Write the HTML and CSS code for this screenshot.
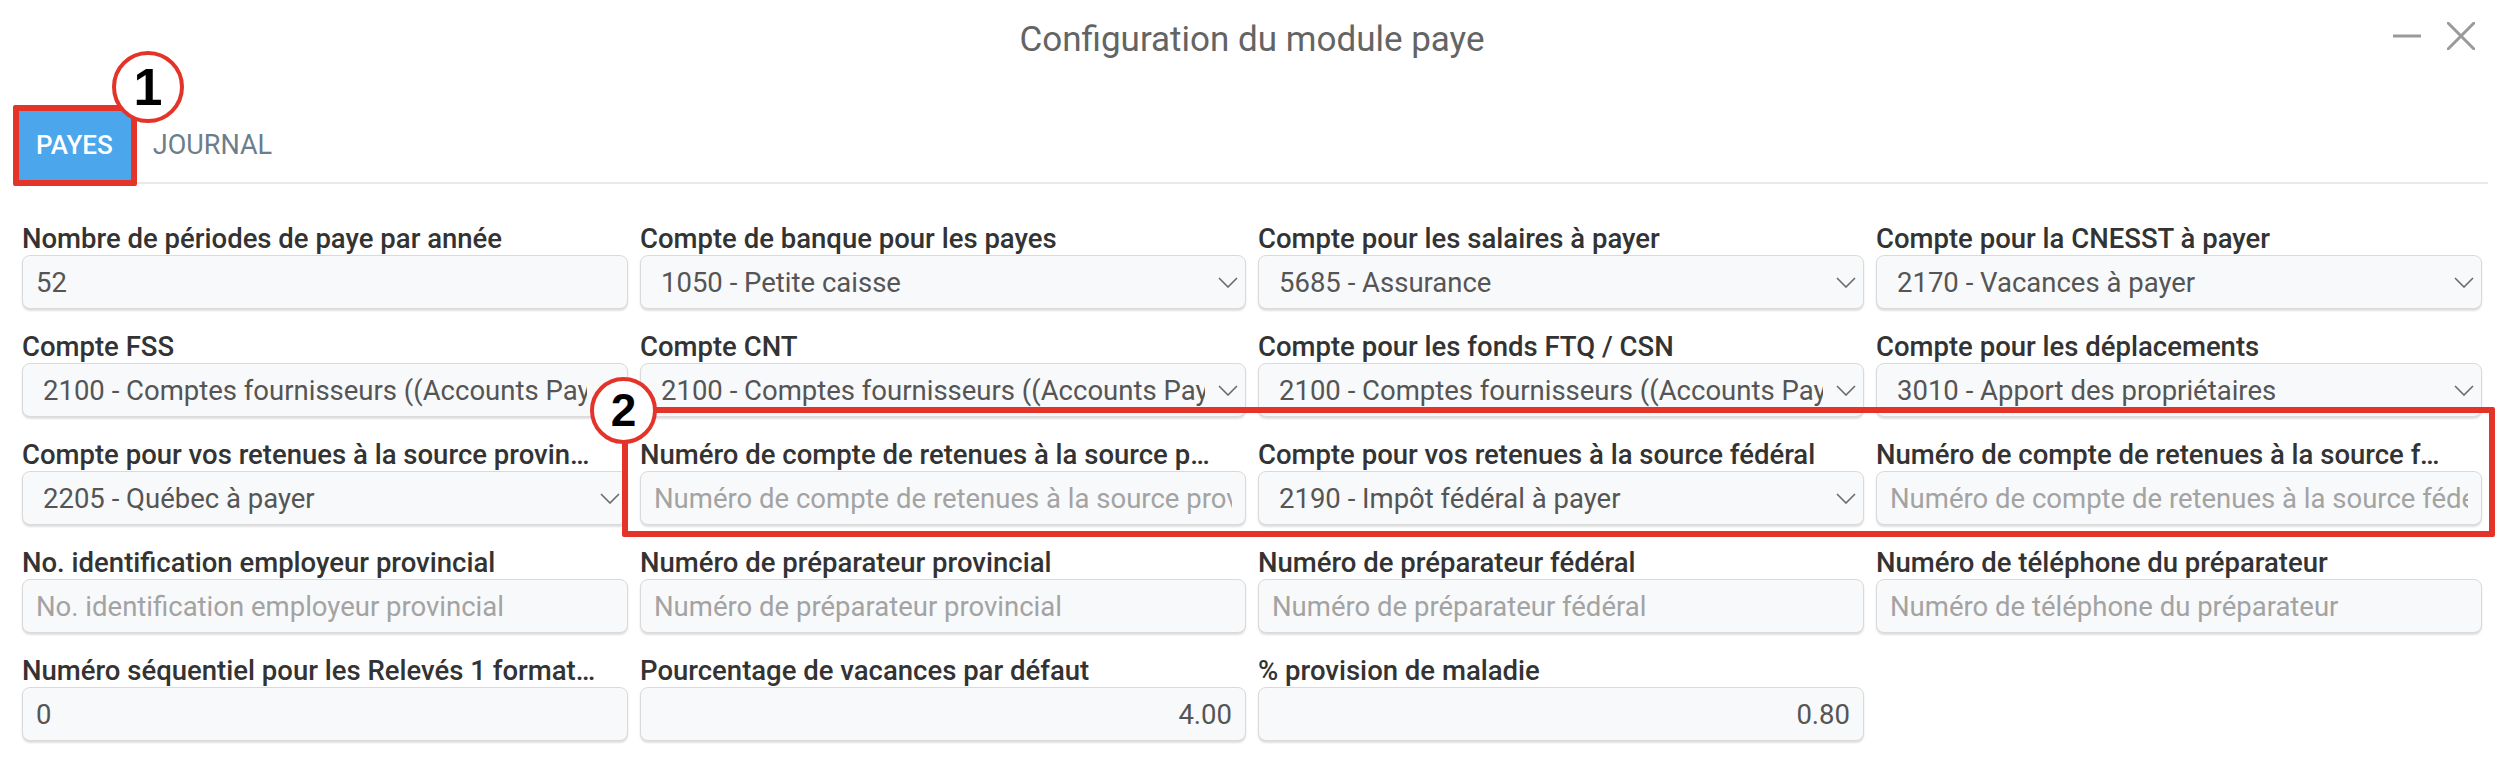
FILE: index.html
```html
<!DOCTYPE html>
<html lang="fr">
<head>
    <meta charset="UTF-8">
    <meta name="viewport" content="width=device-width, initial-scale=1.0">
    <title>Configuration du module paye</title>
    <link rel="stylesheet" href="styles.css">
</head>
<body>
    <div class="modal">
        <header class="modal-header">
            <span></span>
            <h1>Configuration du module paye</h1>
            <div class="window-buttons">
                <svg width="28" height="28" viewBox="0 0 28 28"><line x1="0" y1="14" x2="28" y2="14"/></svg>
                <svg width="28" height="28" viewBox="0 0 28 28"><line x1="1" y1="1" x2="27" y2="27"/><line x1="27" y1="1" x2="1" y2="27"/></svg>
            </div>
        </header>

        <nav class="tabs">
            <a href="#" class="tab active">PAYES</a>
            <a href="#" class="tab">JOURNAL</a>
        </nav>

        <form class="grid" action="#">
            <div class="field">
                <label for="nbPeriodes">Nombre de périodes de paye par année</label>
                <input type="text" id="nbPeriodes" value="52">
            </div>
            <div class="field">
                <label for="cptBanque">Compte de banque pour les payes</label>
                <div class="select">
                    <select id="cptBanque"><option>1050 - Petite caisse</option></select>
                    <svg class="chevron" viewBox="0 0 20 11"><polyline points="1,1 10,10 19,1"/></svg>
                </div>
            </div>
            <div class="field">
                <label for="cptSalaires">Compte pour les salaires à payer</label>
                <div class="select">
                    <select id="cptSalaires"><option>5685 - Assurance</option></select>
                    <svg class="chevron" viewBox="0 0 20 11"><polyline points="1,1 10,10 19,1"/></svg>
                </div>
            </div>
            <div class="field">
                <label for="cptCnesst">Compte pour la CNESST à payer</label>
                <div class="select">
                    <select id="cptCnesst"><option>2170 - Vacances à payer</option></select>
                    <svg class="chevron" viewBox="0 0 20 11"><polyline points="1,1 10,10 19,1"/></svg>
                </div>
            </div>

            <div class="field">
                <label for="cptFss">Compte FSS</label>
                <div class="select">
                    <select id="cptFss"><option>2100 - Comptes fournisseurs ((Accounts Payable))</option></select>
                    <svg class="chevron" viewBox="0 0 20 11"><polyline points="1,1 10,10 19,1"/></svg>
                </div>
            </div>
            <div class="field">
                <label for="cptCnt">Compte CNT</label>
                <div class="select">
                    <select id="cptCnt"><option>2100 - Comptes fournisseurs ((Accounts Payable))</option></select>
                    <svg class="chevron" viewBox="0 0 20 11"><polyline points="1,1 10,10 19,1"/></svg>
                </div>
            </div>
            <div class="field">
                <label for="cptFtq">Compte pour les fonds FTQ / CSN</label>
                <div class="select">
                    <select id="cptFtq"><option>2100 - Comptes fournisseurs ((Accounts Payable))</option></select>
                    <svg class="chevron" viewBox="0 0 20 11"><polyline points="1,1 10,10 19,1"/></svg>
                </div>
            </div>
            <div class="field">
                <label for="cptDepl">Compte pour les déplacements</label>
                <div class="select">
                    <select id="cptDepl"><option>3010 - Apport des propriétaires</option></select>
                    <svg class="chevron" viewBox="0 0 20 11"><polyline points="1,1 10,10 19,1"/></svg>
                </div>
            </div>

            <div class="field">
                <label for="cptRetProv">Compte pour vos retenues à la source provinciale</label>
                <div class="select">
                    <select id="cptRetProv"><option>2205 - Québec à payer</option></select>
                    <svg class="chevron" viewBox="0 0 20 11"><polyline points="1,1 10,10 19,1"/></svg>
                </div>
            </div>
            <div class="field">
                <label for="noRetProv">Numéro de compte de retenues à la source provinciale</label>
                <input type="text" id="noRetProv" placeholder="Numéro de compte de retenues à la source provinciale">
            </div>
            <div class="field">
                <label for="cptRetFed">Compte pour vos retenues à la source fédéral</label>
                <div class="select">
                    <select id="cptRetFed"><option>2190 - Impôt fédéral à payer</option></select>
                    <svg class="chevron" viewBox="0 0 20 11"><polyline points="1,1 10,10 19,1"/></svg>
                </div>
            </div>
            <div class="field">
                <label for="noRetFed">Numéro de compte de retenues à la source fédérale</label>
                <input type="text" id="noRetFed" placeholder="Numéro de compte de retenues à la source fédérale">
            </div>

            <div class="field">
                <label for="noEmployeur">No. identification employeur provincial</label>
                <input type="text" id="noEmployeur" placeholder="No. identification employeur provincial">
            </div>
            <div class="field">
                <label for="prepProv">Numéro de préparateur provincial</label>
                <input type="text" id="prepProv" placeholder="Numéro de préparateur provincial">
            </div>
            <div class="field">
                <label for="prepFed">Numéro de préparateur fédéral</label>
                <input type="text" id="prepFed" placeholder="Numéro de préparateur fédéral">
            </div>
            <div class="field">
                <label for="prepTel">Numéro de téléphone du préparateur</label>
                <input type="text" id="prepTel" placeholder="Numéro de téléphone du préparateur">
            </div>

            <div class="field">
                <label for="noSeq">Numéro séquentiel pour les Relevés 1 format XML</label>
                <input type="text" id="noSeq" value="0">
            </div>
            <div class="field">
                <label for="pctVacances">Pourcentage de vacances par défaut</label>
                <input type="text" id="pctVacances" class="num" value="4.00">
            </div>
            <div class="field">
                <label for="pctMaladie">% provision de maladie</label>
                <input type="text" id="pctMaladie" class="num" value="0.80">
            </div>
        </form>

        <!-- repères de la capture d'aide -->
        <div class="mark-box mark-tab"></div>
        <div class="mark-num mark-num-1">1</div>
        <div class="mark-box mark-retenues"></div>
        <div class="mark-num mark-num-2">2</div>
    </div>
</body>
</html>
```

FILE: styles.css
```css
body {
    font-family: Roboto, "Liberation Sans", sans-serif;
    background-color: #fff;
    margin: 0;
    padding: 0;
}
.modal {
    position: relative;
    height: 770px;
    overflow: hidden;
}
.modal-header {
    display: grid;
    grid-template-columns: 1fr auto 1fr;
    padding-top: 18px;
}
.modal-header h1 {
    margin: 0;
    font-size: 35px;
    font-weight: 400;
    line-height: 44px;
    color: #646464;
}
.window-buttons {
    display: flex;
    justify-content: flex-end;
    align-items: center;
    gap: 26px;
    padding-right: 29px;
    height: 36px;
}
.window-buttons svg {
    stroke: #9a9a9a;
    stroke-width: 3;
    stroke-linecap: round;
}
.tabs {
    display: flex;
    margin: 46px 16px 0;
    border-bottom: 2px solid #e9e9e9;
}
.tab {
    height: 74px;
    line-height: 74px;
    padding: 0 20px;
    font-size: 27px;
    font-weight: 400;
    color: #6c7d8b;
    text-decoration: none;
}
.tab.active {
    background-color: #4ba6ec;
    color: #fff;
    font-size: 26px;
    font-weight: 500;
}
.grid {
    display: grid;
    grid-template-columns: repeat(4, 1fr);
    column-gap: 12px;
    row-gap: 21px;
    padding: 38px 22px 0;
}
.field {
    min-width: 0;
}
label {
    display: block;
    font-size: 27.5px;
    font-weight: 500;
    line-height: 33px;
    color: #333;
    padding-right: 30px;
    white-space: nowrap;
    overflow: hidden;
    text-overflow: ellipsis;
}
input, select {
    display: block;
    box-sizing: border-box;
    width: 100%;
    height: 54px;
    padding: 0 13px;
    border: 1px solid #dadada;
    border-radius: 8px;
    background-color: #f8f9fa;
    box-shadow: 0 2px 2px rgba(0, 0, 0, 0.13);
    font-family: inherit;
    font-size: 27.5px;
    color: #555;
    outline: none;
}
input::placeholder {
    color: #a3a3a3;
}
input.num {
    text-align: right;
}
.select {
    position: relative;
}
select {
    appearance: none;
    padding: 0 40px 0 20px;
}
.chevron {
    position: absolute;
    right: 8px;
    top: 22px;
    width: 20px;
    height: 11px;
    fill: none;
    stroke: #6a6a6a;
    stroke-width: 1.6;
    pointer-events: none;
}

/* repères rouges */
.mark-box {
    position: absolute;
    box-sizing: border-box;
    border: 6px solid #e4342a;
    border-radius: 2px;
}
.mark-tab {
    left: 13px;
    top: 105px;
    width: 124px;
    height: 81px;
}
.mark-retenues {
    left: 622px;
    top: 407px;
    width: 1873px;
    height: 130px;
}
.mark-num {
    position: absolute;
    box-sizing: border-box;
    border: 4px solid #e4342a;
    border-radius: 50%;
    background-color: #fff;
    color: #000;
    font-family: "Liberation Sans", Arial, sans-serif;
    font-weight: 700;
    text-align: center;
}
.mark-num-1 {
    left: 112px;
    top: 51px;
    width: 72px;
    height: 72px;
    line-height: 64px;
    font-size: 52px;
}
.mark-num-2 {
    left: 590px;
    top: 377px;
    width: 67px;
    height: 67px;
    line-height: 59px;
    font-size: 46px;
}
```
